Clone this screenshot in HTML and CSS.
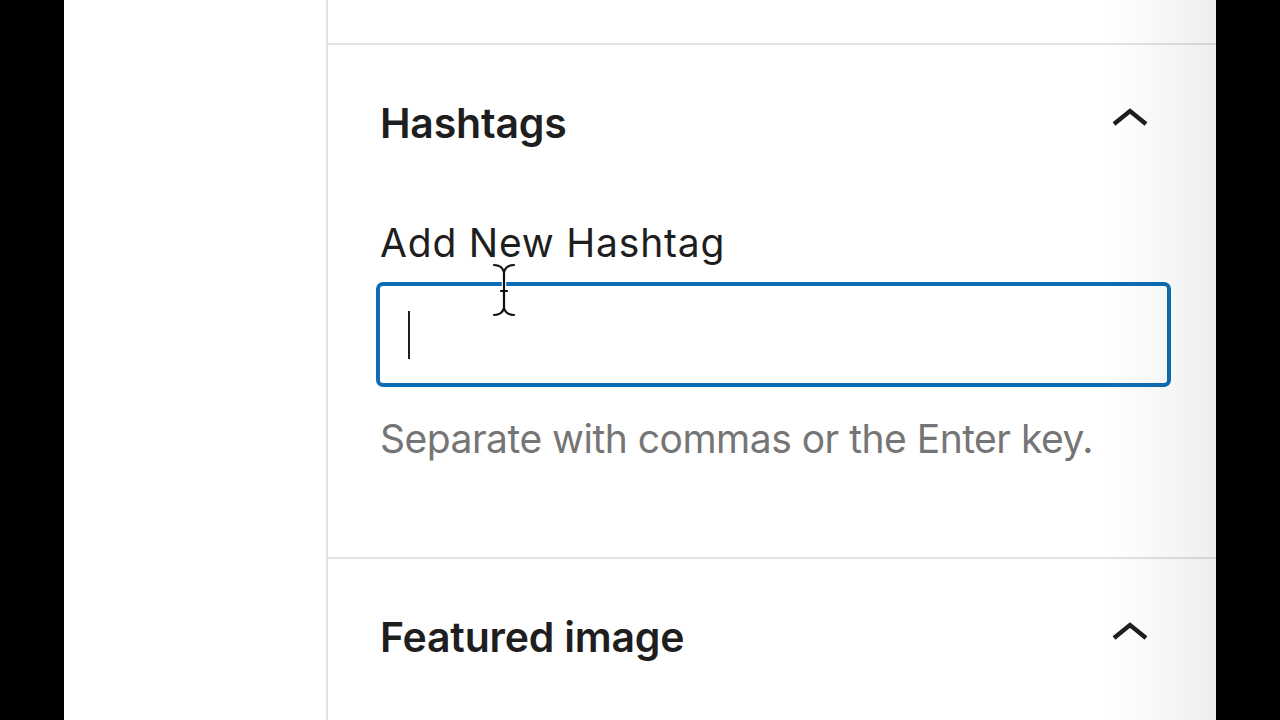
FILE: index.html
```html
<!DOCTYPE html>
<html lang="en">
<head>
<meta charset="utf-8">
<title>Hashtags panel</title>
<link rel="stylesheet" href="styles.css">
</head>
<body>
<div class="frame">
  <div class="left-area"></div>
  <div class="panel">
    <div class="section section-top"></div>
    <div class="section section-hashtags">
      <div class="section-header">
        <h2 class="section-title">Hashtags</h2>
        <svg class="chevron" width="40" height="24" viewBox="0 0 40 24"><polyline points="4,20 20,7 36,20" fill="none" stroke="#1e1e1e" stroke-width="4.4"/></svg>
      </div>
      <label class="field-label">Add New Hashtag</label>
      <div class="text-input"><span class="caret"></span></div>
      <p class="help">Separate with commas or the Enter key.</p>
    </div>
    <div class="section section-featured">
      <div class="section-header">
        <h2 class="section-title">Featured image</h2>
        <svg class="chevron" width="40" height="24" viewBox="0 0 40 24"><polyline points="4,20 20,7 36,20" fill="none" stroke="#1e1e1e" stroke-width="4.4"/></svg>
      </div>
    </div>
    <div class="edge-shadow"></div>
    <svg class="ibeam" width="24" height="54" viewBox="0 0 24 54">
      <g fill="none" stroke="#fff" stroke-width="4.5" stroke-linecap="round">
        <path d="M2 2 Q10 2 12 9 Q14 2 22 2"/>
        <path d="M12 9 V45"/>
        <path d="M2 52 Q10 52 12 45 Q14 52 22 52"/>
      </g>
      <g fill="none" stroke="#111" stroke-width="2.2" stroke-linecap="round">
        <path d="M2 2 Q10 2 12 9 Q14 2 22 2"/>
        <path d="M12 9 V45"/>
        <path d="M2 52 Q10 52 12 45 Q14 52 22 52"/>
        <path d="M9 28 H15"/>
      </g>
    </svg>
  </div>
</div>
</body>
</html>
```
FILE: styles.css
```css
html, body {
  margin: 0;
  padding: 0;
  background: #000;
  height: 720px;
  overflow: hidden;
}
.frame {
  margin-left: 64px;
  width: 1152px;
  height: 720px;
  background: #fff;
  display: flex;
  font-family: Inter, "Noto Sans", sans-serif;
  color: #1e1e1e;
}
.left-area {
  width: 262px;
  border-right: 2px solid #e2e2e2;
  flex-shrink: 0;
}
.panel {
  flex: 1;
  position: relative;
  display: flex;
  flex-direction: column;
}
.section {
  border-bottom: 2px solid #e2e2e2;
  padding: 0 45px 0 48px;
}
.section-top {
  height: 43px;
}
.section-hashtags {
  height: 514px;
  box-sizing: border-box;
  padding-top: 53px;
}
.section-featured {
  padding-top: 53px;
  border-bottom: none;
  flex: 1;
}
.section-header {
  display: flex;
  justify-content: space-between;
  align-items: flex-start;
}
.section-title {
  margin: 0 0 0 4px;
  font-size: 41px;
  line-height: 50px;
  font-weight: 600;
  letter-spacing: -0.2px;
}
.chevron {
  margin-top: 6px;
  margin-right: 21px;
}
.field-label {
  display: block;
  margin: 71px 0 0 4px;
  font-size: 39px;
  line-height: 48px;
  font-weight: 400;
  letter-spacing: 0.8px;
}
.text-input {
  margin-top: 15px;
  height: 97px;
  border: 4px solid #0d6db3;
  border-radius: 7px;
  display: flex;
  align-items: center;
  padding-left: 28px;
}
.caret {
  width: 2px;
  height: 48px;
  background: #1e1e1e;
}
.help {
  margin: 28px 0 0 4px;
  font-size: 39px;
  line-height: 48px;
  color: #757575;
  letter-spacing: -0.5px;
}
.edge-shadow {
  position: absolute;
  top: 0;
  right: 0;
  width: 110px;
  height: 100%;
  pointer-events: none;
  background: linear-gradient(to right, rgba(0,0,0,0) 0%, rgba(0,0,0,0.03) 50%, rgba(0,0,0,0.065) 100%);
}
.ibeam {
  position: absolute;
  left: 164px;
  top: 263px;
}
```
